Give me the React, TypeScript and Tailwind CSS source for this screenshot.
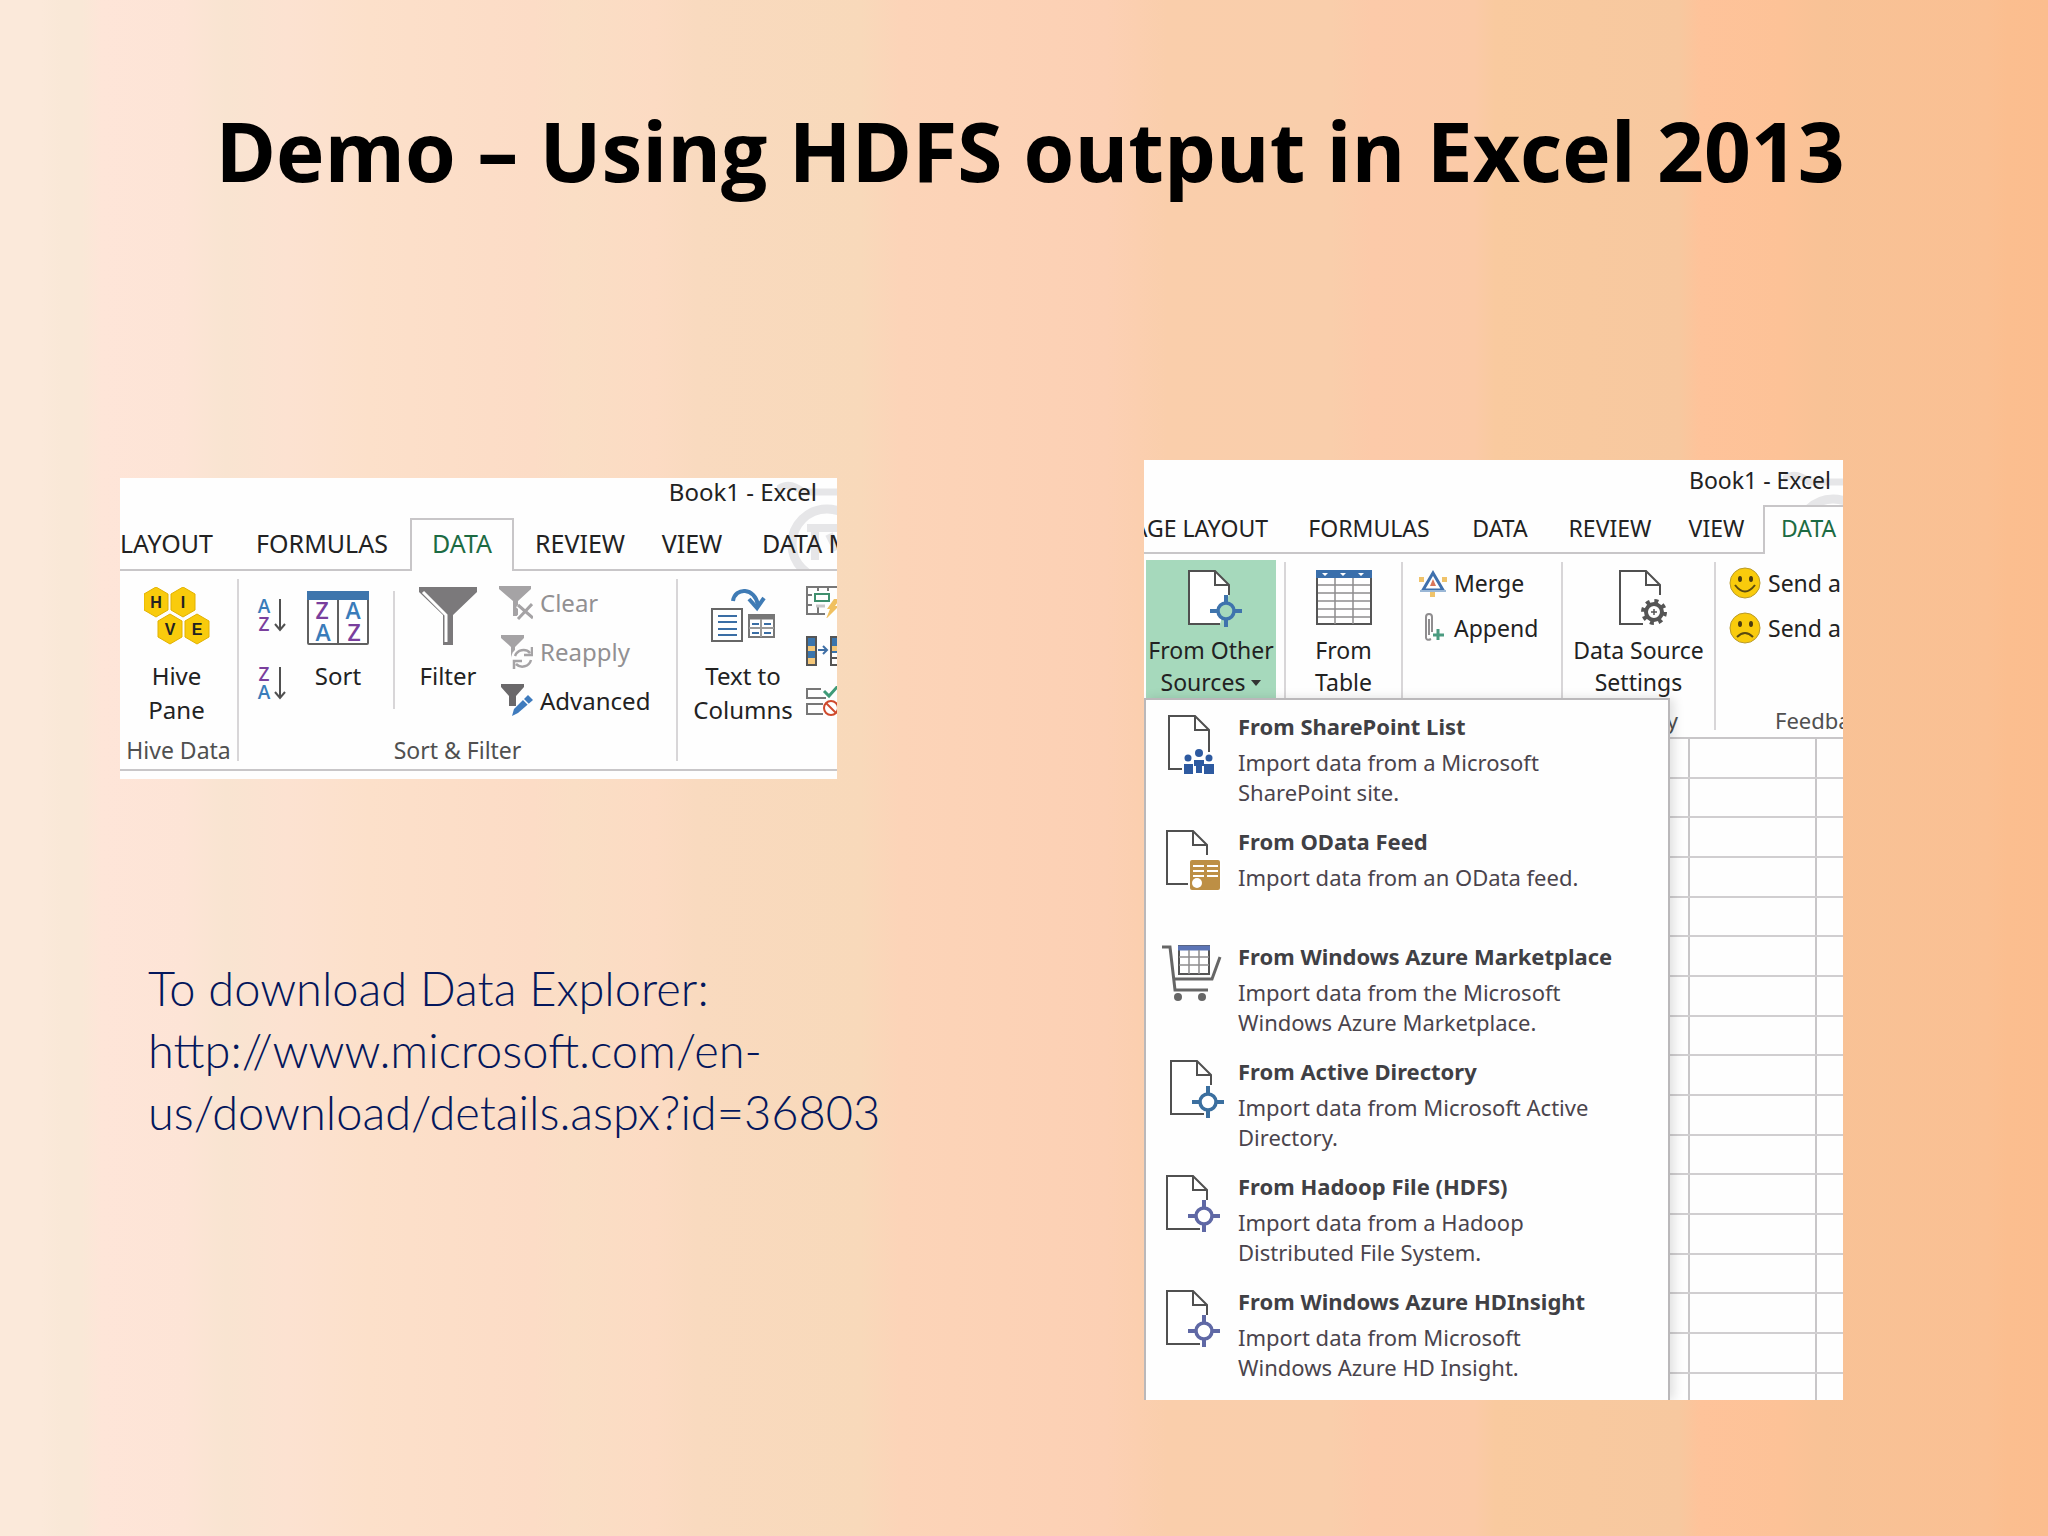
import type { ReactNode } from 'react';

type IconProps = { className?: string };

/* ---------- Shared pieces ---------- */

const Page = ({ x = 0, y = 0, notch = 32 }: { x?: number; y?: number; notch?: number }) => (
    <g transform={`translate(${x} ${y})`} stroke="#505050" strokeWidth="2" fill="none">
        <path d={`M${notch} 54H1V1H27L41 15V${notch === 32 ? 24 : 34}`} fill="#fff" stroke="none" />
        <path d={`M${notch} 54H1V1H27L41 15V25`} />
        <path d="M27 1V15H41" />
    </g>
);

const Target = ({ x, y, color, fill = '#fff' }: { x: number; y: number; color: string; fill?: string }) => (
    <g transform={`translate(${x} ${y})`} stroke={color} fill={fill}>
        <circle r="8" strokeWidth="3.5" />
        <path d="M0 -16V-9M0 9V16M-16 0H-9M9 0H16" strokeWidth="4" />
    </g>
);

const Watermark = ({ className }: IconProps) => (
    <svg viewBox="0 0 60 94" className={className} fill="none" stroke="#e6e6e8">
        <path d="M0 12Q12 2 26 14H60" strokeWidth="7" />
        <circle cx="50" cy="66" r="35" strokeWidth="9" />
        <path d="M30 50H60M38 54V82M52 56L60 72" strokeWidth="8" />
    </svg>
);

/* ---------- Data ribbon icons ---------- */

const HiveIcon = () => {
    const cells = [
        { x: 12, y: 15, letter: 'H' },
        { x: 39, y: 15, letter: 'I' },
        { x: 26, y: 42, letter: 'V' },
        { x: 53, y: 42, letter: 'E' },
    ];
    return (
        <svg width="66" height="58" viewBox="0 0 66 58">
            {cells.map((cell) => (
                <g key={cell.letter} transform={`translate(${cell.x} ${cell.y})`}>
                    <path d="M0 -15L12 -8V8L0 15L-12 8V-8Z" fill="#f9cb0c" stroke="#e2b100" strokeWidth="1" />
                    <text y="6" textAnchor="middle" fontSize="16" fontWeight="700" fontFamily="Liberation Sans" fill="#222">
                        {cell.letter}
                    </text>
                </g>
            ))}
        </svg>
    );
};

const LetterSortIcon = ({ top, bottom }: { top: 'A' | 'Z'; bottom: 'A' | 'Z' }) => (
    <svg width="30" height="36" viewBox="0 0 30 36" fontSize="19" fontFamily="Open Sans" fontWeight="600">
        <text x="7" y="16" textAnchor="middle" fill={top === 'A' ? '#3a7cba' : '#7a3f9d'}>{top}</text>
        <text x="7" y="34" textAnchor="middle" fill={bottom === 'A' ? '#3a7cba' : '#7a3f9d'}>{bottom}</text>
        <path d="M23 2V32M18 27L23 33L28 27" fill="none" stroke="#505050" strokeWidth="2" />
    </svg>
);

const SortIcon = () => (
    <svg width="62" height="54" viewBox="0 0 62 54" fontSize="23" fontFamily="Open Sans" fontWeight="600" textAnchor="middle">
        <rect x="1" y="1" width="60" height="52" rx="1" fill="#fff" stroke="#606060" strokeWidth="2" />
        <rect width="62" height="9" fill="#3e75ac" />
        <path d="M31 9V53" stroke="#606060" strokeWidth="2" />
        <text x="15" y="28" fill="#7a3f9d">Z</text>
        <text x="16" y="50" fill="#3a7cba">A</text>
        <text x="46" y="28" fill="#3a7cba">A</text>
        <text x="47" y="50" fill="#7a3f9d">Z</text>
    </svg>
);

const FilterIcon = () => (
    <svg width="58" height="58" viewBox="0 0 58 58">
        <path d="M0 0H58V5L34 28V58H24V28L0 5Z" fill="#7b797b" />
        <path d="M4 5L27 28V55" fill="none" stroke="#fff" strokeWidth="3" />
    </svg>
);

const ClearIcon = () => (
    <svg width="34" height="34" viewBox="0 0 34 34">
        <path d="M0 0H32V3L19 15V30H14V15L0 3Z" fill="#a5a3a5" />
        <path d="M19 19L34 32M33 18L19 33" stroke="#fff" strokeWidth="6" />
        <path d="M19 19L34 32M33 18L19 33" stroke="#a5a3a5" strokeWidth="3" />
    </svg>
);

const ReapplyIcon = () => (
    <svg width="34" height="34" viewBox="0 0 34 34">
        <path d="M2 0H25V3L16 12V24H12V12L2 3Z" fill="#a5a3a5" />
        <circle cx="24" cy="24" r="12" fill="#fefefe" />
        <g fill="none" stroke="#a5a3a5" strokeWidth="2.5">
            <path d="M16 21A9 9 0 0 1 31 18M33 12V20H25" />
            <path d="M32 25A9 9 0 0 1 17 29M15 34V26H23" />
        </g>
    </svg>
);

const AdvancedIcon = () => (
    <svg width="34" height="34" viewBox="0 0 34 34">
        <path d="M2 0H25V3L17 12V22H10V12L2 3Z" fill="#6a686a" />
        <path d="M29 11L34 16L19 29L13 32L15 25Z" fill="#3f7bbd" />
        <path d="M24 15L30 21" stroke="#fff" strokeWidth="1.5" />
    </svg>
);

const TextToColumnsIcon = () => (
    <svg width="64" height="56" viewBox="0 0 64 56" fill="none">
        <path d="M22 14C24 0 44 0 47 18" stroke="#3f7bb5" strokeWidth="4" />
        <path d="M38 12L46 21L53 11" stroke="#3f7bb5" strokeWidth="4" />
        <rect x="1" y="22" width="30" height="32" stroke="#666" strokeWidth="2" fill="#fff" />
        <path d="M7 29H26M7 35H26M7 42H26M7 48H26" stroke="#3a6ea5" strokeWidth="2" />
        <rect x="38" y="28" width="25" height="22" stroke="#777" strokeWidth="2" fill="#fff" />
        <path d="M37 30H64" stroke="#777" strokeWidth="5" />
        <path d="M50 32V50M38 41H63" stroke="#999" strokeWidth="2" />
        <path d="M41 37H48M53 37H60M41 46H48M53 46H60" stroke="#3a6ea5" strokeWidth="2" />
    </svg>
);

const FlashFillIcon = () => (
    <svg width="32" height="32" viewBox="0 0 32 32" fill="none">
        <path d="M32 1H1V28H19M1 9H6M1 19H6M12 1V5M22 1V5M12 20V28" stroke="#777" strokeWidth="2" />
        <path d="M10 20H19" stroke="#c8c6c8" strokeWidth="3" />
        <rect x="9" y="8" width="14" height="7" stroke="#3f8f6d" strokeWidth="2" />
        <path d="M28 13H34L29 20H33L20 33L24 23H21Z" fill="#f0c060" />
    </svg>
);

const RemoveDuplicatesIcon = () => (
    <svg width="32" height="32" viewBox="0 0 32 32">
        <rect x="1" y="1" width="9" height="28" fill="#3a75ad" stroke="#555" strokeWidth="2" />
        <path d="M2 10H9V15H2ZM2 22H9V28H2Z" fill="#f5c778" />
        <path d="M12 14H20M17 10L21 14L17 18" stroke="#3f6fa5" strokeWidth="2" fill="none" />
        <path d="M32 1H25V29H32" fill="#3a75ad" stroke="#555" strokeWidth="2" />
        <path d="M26 10H32V15H26Z" fill="#f5c778" />
        <path d="M26 17H32V28H26Z" fill="#fff" />
        <path d="M26 22H32" stroke="#555" strokeWidth="2" />
    </svg>
);

const ValidationIcon = () => (
    <svg width="32" height="32" viewBox="0 0 32 32" fill="none">
        <path d="M15 3H1V12H20M17 18H1V28H17" stroke="#777" strokeWidth="2" />
        <path d="M18 5L23 10L32 0" stroke="#3f9b78" strokeWidth="3" />
        <circle cx="25" cy="22" r="7" fill="#fff" stroke="#cf4a2d" strokeWidth="2" />
        <path d="M20 17L30 27" stroke="#cf4a2d" strokeWidth="2" />
    </svg>
);

/* ---------- Data Explorer icons ---------- */

const OtherSourcesIcon = () => (
    <svg width="66" height="58" viewBox="-10 0 66 58">
        <Page />
        <Target x={38} y={41} color="#3f74ad" fill="#a6d9bc" />
    </svg>
);

const TableIcon = () => (
    <svg width="56" height="56" viewBox="0 0 56 56">
        <rect x="1" y="1" width="54" height="53" fill="#fff" stroke="#555" strokeWidth="2" />
        <rect width="56" height="8" fill="#3a6fab" />
        <path d="M6 3H12L9 6ZM24 3H30L27 6ZM42 3H48L45 6Z" fill="#fff" />
        <path d="M2 15H54M2 23H54M2 31H54M2 39H54M2 47H54M19 8V54M37 8V54" stroke="#8f8d8f" strokeWidth="1.5" />
    </svg>
);

const MergeIcon = () => (
    <svg width="28" height="28" viewBox="0 0 28 28">
        <path d="M0 8H5V13H0ZM23 8H28V13H23ZM11 23H16V28H11Z" fill="#f0c36a" />
        <path d="M14 4L24 21H4Z" fill="#fff" stroke="#3f70ad" strokeWidth="3" />
        <path d="M1 22H27" stroke="#9ab7d6" strokeWidth="2" />
        <path d="M14 10L17 17H11Z" fill="#d9765a" />
    </svg>
);

const AppendIcon = () => (
    <svg width="28" height="30" viewBox="0 0 28 30" fill="none">
        <path d="M13 19V4Q13 1 10 1Q7 1 7 4V25Q8 28 12 26M10 6V22" stroke="#8f8d8f" strokeWidth="2" />
        <path d="M19 16V27M14 22H25" stroke="#4b9b80" strokeWidth="3" />
    </svg>
);

const SettingsIcon = () => (
    <svg width="60" height="56" viewBox="-10 0 60 56">
        <Page notch={24} />
        <circle cx="35" cy="42" r="14" fill="#fff" />
        <circle cx="35" cy="42" r="8" fill="none" stroke="#555" strokeWidth="4" />
        <circle cx="35" cy="42" r="11" fill="none" stroke="#555" strokeWidth="4" strokeDasharray="4 4.64" />
        <path d="M35 39V45M32 42H38" stroke="#555" strokeWidth="1.5" />
    </svg>
);

const FaceIcon = ({ sad = false }: { sad?: boolean }) => (
    <svg width="32" height="32" viewBox="0 0 32 32">
        <circle cx="16" cy="16" r="15" fill="#f9cb0c" stroke="#b99a2a" strokeWidth="1" />
        <ellipse cx="11" cy="12" rx="2" ry="3" fill="#4a3a10" />
        <ellipse cx="22" cy="12" rx="2" ry="3" fill="#4a3a10" />
        <path d={sad ? 'M8 25Q16 17 24 25' : 'M6 18Q16 31 26 18'} fill="none" stroke="#5a4a10" strokeWidth="2" />
    </svg>
);

const SharePointIcon = () => (
    <svg width="64" height="64" viewBox="0 0 64 64">
        <Page x={6} y={3} notch={14} />
        <rect x="21" y="38" width="32" height="26" fill="#fff" />
        <path d="M47 28V40" stroke="#505050" strokeWidth="2" />
        <g fill="#2e5aa0">
            <circle cx="37" cy="41" r="4" />
            <circle cx="26" cy="46" r="3.5" />
            <circle cx="47" cy="46" r="3.5" />
            <path d="M22 52H31V62H22ZM42 52H52V62H42ZM32 48H42V54H40V61H34V54H32Z" />
        </g>
    </svg>
);

const ODataIcon = () => (
    <svg width="64" height="64" viewBox="0 0 64 64">
        <Page x={4} y={3} notch={22} />
        <path d="M26 32H60V64H26Z" fill="#fff" />
        <rect x="28" y="33" width="30" height="30" rx="2" fill="#bd8f45" />
        <path d="M31 39H42M45 39H56M31 44H42M45 44H56M31 49H42M45 49H56" stroke="#fff" strokeWidth="2" />
        <circle cx="35" cy="56" r="5" fill="#fff" />
    </svg>
);

const CartIcon = () => (
    <svg width="64" height="64" viewBox="0 0 64 64" fill="none">
        <rect x="17" y="4" width="30" height="28" fill="#fff" stroke="#555" strokeWidth="2" />
        <path d="M16 6H48" stroke="#5b74b5" strokeWidth="5" />
        <path d="M17 15H47M17 23H47M27 8V32M37 8V32" stroke="#8f8d8f" strokeWidth="1.5" />
        <path d="M0 5H8L13 48H46" stroke="#666" strokeWidth="3" />
        <path d="M12 37H50L58 15" stroke="#666" strokeWidth="3" />
        <circle cx="16" cy="55" r="4" fill="#666" />
        <circle cx="40" cy="55" r="4" fill="#666" />
    </svg>
);

const DirectoryIcon = () => (
    <svg width="64" height="64" viewBox="0 0 64 64">
        <Page x={8} y={3} notch={34} />
        <Target x={46} y={45} color="#3b6f9f" />
    </svg>
);

const HadoopIcon = () => (
    <svg width="64" height="64" viewBox="0 0 64 64">
        <Page x={4} y={3} notch={34} />
        <Target x={42} y={44} color="#5f68a5" />
    </svg>
);

const sources = [
    { title: 'From SharePoint List', lines: ['Import data from a Microsoft', 'SharePoint site.'], icon: <SharePointIcon /> },
    { title: 'From OData Feed', lines: ['Import data from an OData feed.'], icon: <ODataIcon /> },
    { title: 'From Windows Azure Marketplace', lines: ['Import data from the Microsoft', 'Windows Azure Marketplace.'], icon: <CartIcon /> },
    { title: 'From Active Directory', lines: ['Import data from Microsoft Active', 'Directory.'], icon: <DirectoryIcon /> },
    { title: 'From Hadoop File (HDFS)', lines: ['Import data from a Hadoop', 'Distributed File System.'], icon: <HadoopIcon /> },
    { title: 'From Windows Azure HDInsight', lines: ['Import data from Microsoft', 'Windows Azure HD Insight.'], icon: <HadoopIcon /> },
];

/* ---------- Ribbon parts ---------- */

const Tab = ({ className, children }: { className: string; children: ReactNode }) => (
    <button type="button" className={`shrink-0 whitespace-nowrap border-[#c8c6c8] ${className}`}>
        {children}
    </button>
);

const BigButton = ({ icon, className = '', children }: { icon: ReactNode; className?: string; children: ReactNode }) => (
    <button type="button" className={`flex shrink-0 flex-col items-center whitespace-nowrap ${className}`}>
        {icon}
        <span className="mt-auto">{children}</span>
    </button>
);

const SmallButton = ({ icon, className = '', children }: { icon: ReactNode; className?: string; children: ReactNode }) => (
    <button type="button" className={`flex items-center whitespace-nowrap ${className}`}>
        {icon}
        <span className="ml-[7px]">{children}</span>
    </button>
);

const DataRibbon = () => (
    <div className="relative w-full max-w-[717px] overflow-hidden bg-[#fefefe] text-[24px] text-[#222]">
        <Watermark className="absolute right-0 top-0 h-[94px] w-[60px]" />
        <div className="relative flex h-10 justify-end pr-5 leading-7">Book1 - Excel</div>
        <div className="relative flex h-[53px] text-[25px]">
            <Tab className="w-[114px] border-b-2 text-left">LAYOUT</Tab>
            <Tab className="w-[176px] border-b-2">FORMULAS</Tab>
            <Tab className="w-[104px] border-x-2 border-t-2 bg-[#fefefe] pb-1 text-[#1c6b43]">DATA</Tab>
            <Tab className="w-[132px] border-b-2">REVIEW</Tab>
            <Tab className="w-[92px] border-b-2">VIEW</Tab>
            <Tab className="w-[160px] border-b-2 pl-6 text-left">DATA MODEL</Tab>
        </div>
        <div className="relative flex h-[200px] border-b-2 border-[#c8c6c8] bg-[#fefefe] leading-[34px]">
            <div className="my-2 flex w-[119px] shrink-0 flex-col items-center border-r-2 border-[#d8d6d8]">
                <BigButton icon={<HiveIcon />} className="mr-1 mt-2 h-[140px]">
                    Hive<br />Pane
                </BigButton>
                <div className="mt-auto text-[23px] leading-[22px] text-[#505050]">Hive Data</div>
            </div>
            <div className="my-2 flex w-[439px] shrink-0 flex-col border-r-2 border-[#d8d6d8]">
                <div className="flex">
                    <div className="ml-[18px] mt-[18px] flex flex-col gap-8">
                        <button type="button" aria-label="Sort A to Z"><LetterSortIcon top="A" bottom="Z" /></button>
                        <button type="button" aria-label="Sort Z to A"><LetterSortIcon top="Z" bottom="A" /></button>
                    </div>
                    <BigButton icon={<SortIcon />} className="ml-5 mt-3 h-[102px]">Sort</BigButton>
                    <div className="ml-6 mt-3 h-[118px] w-0.5 bg-[#d8d6d8]" />
                    <BigButton icon={<FilterIcon />} className="ml-6 mt-2 h-[106px]">Filter</BigButton>
                    <div className="ml-[22px] mt-[7px] flex flex-col gap-[15px]">
                        <SmallButton icon={<ClearIcon />} className="text-[#929092]">Clear</SmallButton>
                        <SmallButton icon={<ReapplyIcon />} className="text-[#929092]">Reapply</SmallButton>
                        <SmallButton icon={<AdvancedIcon />}>Advanced</SmallButton>
                    </div>
                </div>
                <div className="mt-auto text-center text-[23px] leading-[22px] text-[#505050]">Sort &amp; Filter</div>
            </div>
            <div className="my-2 flex shrink-0 pl-3">
                <BigButton icon={<TextToColumnsIcon />} className="mt-2 h-[140px] w-[106px]">
                    Text to<br />Columns
                </BigButton>
                <div className="ml-[10px] mt-[7px] flex flex-col gap-[18px]">
                    <button type="button" aria-label="Flash Fill"><FlashFillIcon /></button>
                    <button type="button" aria-label="Remove Duplicates"><RemoveDuplicatesIcon /></button>
                    <button type="button" aria-label="Data Validation"><ValidationIcon /></button>
                </div>
            </div>
        </div>
        <div className="h-2" />
    </div>
);

const SourcesMenu = () => (
    <div role="menu" className="absolute bottom-0 left-0 top-[238px] w-[526px] border-x-2 border-t-2 border-[#bab8ba] bg-[#fefefe] pt-[5px] shadow-[4px_0_10px_rgba(0,0,0,0.12)]">
        {sources.map((source) => (
            <button key={source.title} type="button" role="menuitem" className="flex h-[115px] w-full gap-3 px-4 pt-1 text-left">
                <span className="w-16 shrink-0 pt-[3px]">{source.icon}</span>
                <span className="flex flex-col whitespace-nowrap text-[22px] leading-[30px] text-[#4a444c]">
                    <span className="mb-1 font-bold leading-[34px] text-[#404044]">{source.title}</span>
                    {source.lines.map((line) => (
                        <span key={line}>{line}</span>
                    ))}
                </span>
            </button>
        ))}
    </div>
);

const ExplorerRibbon = () => (
    <div className="relative w-full overflow-hidden bg-[#fefefe] text-[23px] text-[#222]">
        <Watermark className="absolute right-0 top-2 h-[94px] w-[60px]" />
        <div className="relative flex h-[45px] justify-end pr-3 leading-10">Book1 - Excel</div>
        <div className="relative flex h-[49px]">
            <Tab className="flex w-[144px] items-center justify-end border-b-2 pr-5">PAGE LAYOUT</Tab>
            <Tab className="w-[162px] border-b-2">FORMULAS</Tab>
            <Tab className="w-[100px] border-b-2">DATA</Tab>
            <Tab className="w-[120px] border-b-2">REVIEW</Tab>
            <Tab className="w-[93px] border-b-2">VIEW</Tab>
            <Tab className="w-[240px] border-l-2 border-t-2 bg-[#fefefe] pb-1 pl-4 text-left text-[#1c6b43]">DATA EXPLORER</Tab>
        </div>
        <div className="relative flex h-[185px] border-b-2 border-[#c8c6c8] bg-[#fefefe] pt-1.5 leading-8">
            <BigButton icon={<OtherSourcesIcon />} className="ml-0.5 h-[140px] w-[130px] bg-[#a6d9bc] pb-0.5 pt-2.5">
                From Other<br />Sources
                <svg width="10" height="6" viewBox="0 0 10 6" className="mb-1 ml-1.5 inline-block"><path d="M0 0H10L5 6Z" fill="#333" /></svg>
            </BigButton>
            <div className="ml-2 mt-0.5 flex h-[168px] w-[119px] shrink-0 justify-center border-x-2 border-[#d8d6d8]">
                <BigButton icon={<TableIcon />} className="h-[136px] pt-2">
                    From<br />Table
                </BigButton>
            </div>
            <div className="mt-0.5 flex h-[168px] w-[160px] shrink-0 flex-col items-start gap-[13px] border-r-2 border-[#d8d6d8] pl-4 pt-[5px]">
                <SmallButton icon={<MergeIcon />}>Merge</SmallButton>
                <SmallButton icon={<AppendIcon />}>Append</SmallButton>
            </div>
            <div className="mt-0.5 flex h-[168px] w-[153px] shrink-0 flex-col items-center border-r-2 border-[#d8d6d8]">
                <BigButton icon={<SettingsIcon />} className="h-[136px] pt-2">
                    Data Source<br />Settings
                </BigButton>
                <div className="mt-auto self-end pr-9 text-[22px] leading-5 text-[#505050]">Query</div>
            </div>
            <div className="mt-0.5 flex h-[168px] shrink-0 flex-col items-start gap-[13px] pl-[13px] pt-[5px]">
                <SmallButton icon={<FaceIcon />}>Send a Smile</SmallButton>
                <SmallButton icon={<FaceIcon sad />}>Send a Frown</SmallButton>
                <div className="mt-auto pl-[46px] text-[22px] leading-5 text-[#505050]">Feedback</div>
            </div>
        </div>
        {/* Worksheet cells */}
        <div className="grid h-[661px] grid-rows-[repeat(16,3fr)_2fr]">
            {Array.from({ length: 17 }, (_, row) => (
                <div key={row} className="flex border-b-2 border-[#d0ced0] last:border-b-0">
                    <div className="w-[546px] shrink-0 border-r-2 border-[#c8c6c8]" />
                    <div className="w-[127px] shrink-0 border-r-2 border-[#c8c6c8]" />
                </div>
            ))}
        </div>
        <SourcesMenu />
    </div>
);

export default function App() {
    return (
        <main className="min-h-screen bg-[linear-gradient(90deg,#fbe9da_0%,#fbe9da_2%,#f9e8d7_3%,#f9e8d7_4%,#fee5d8_5%,#fde4d6_9%,#f9e4d1_11%,#fce2d1_14%,#fce0ca_18%,#fcdcc6_26%,#fadec5_28%,#fcdbc3_32%,#f9dabf_34%,#f8d9ba_42%,#fcd4b8_44%,#fcd0b4_54%,#faceab_57%,#f9ceab_65%,#fccaa9_67%,#fbcaa7_72%,#f9ca9f_73%,#f7c89f_82%,#fec39a_83%,#fdc297_87%,#f8c296_89%,#fac093_97%,#fbbe8f_98%,#fbbd8e_100%)] pb-[136px] font-['Noto_Sans','Open_Sans',sans-serif]">
            <h1 className="pl-3 pt-[90px] text-center font-['Open_Sans','Noto_Sans',sans-serif] text-[82px] font-bold leading-[120px] text-black">
                Demo – Using HDFS output in Excel 2013
            </h1>
            <div className="mt-[250px] grid grid-cols-[830fr_699fr] gap-x-[194px] pl-[120px] pr-[205px]">
                <div className="pt-[18px]">
                    <DataRibbon />
                    <p className="ml-7 mt-[178px] whitespace-nowrap font-['Lato',sans-serif] text-[47px] font-light leading-[62px] text-[#04175c]">
                        To download Data Explorer:<br />
                        <a href="http://www.microsoft.com/en-us/download/details.aspx?id=36803">
                            http://www.microsoft.com/en-<br />us/download/details.aspx?id=36803
                        </a>
                    </p>
                </div>
                <ExplorerRibbon />
            </div>
        </main>
    );
}
